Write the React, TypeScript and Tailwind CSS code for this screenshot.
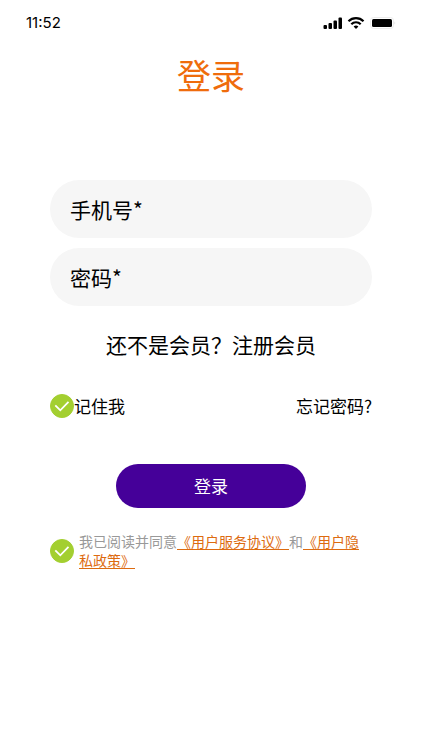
import React, { useState } from 'react';

function StatusIcons() {
  return (
    <div className="flex items-center gap-1">
      <svg width="20" height="12" viewBox="0 0 20 12" fill="black" aria-hidden="true">
        <rect x="0.500" y="8" width="3.500" height="4" rx="1" />
        <rect x="5.500" y="6" width="3.500" height="6" rx="1" />
        <rect x="10.500" y="3.500" width="3.500" height="8.500" rx="1" />
        <rect x="15.500" y="0.500" width="3.500" height="11.500" rx="1" />
      </svg>
      <svg width="18" height="14" viewBox="0 0 18 14" fill="none" stroke="black" strokeWidth="2.2" aria-hidden="true">
        <path d="M1.500 5.200a10.600 10.600 0 0 1 15 0" />
        <path d="M4.300 8.200a6.600 6.600 0 0 1 9.400 0" />
        <path d="M9 13 6.600 10.600a3.400 3.400 0 0 1 4.800 0z" fill="black" stroke="none" />
      </svg>
      <svg width="27" height="14" viewBox="0 0 27 14" fill="none" aria-hidden="true">
        <rect x="1.500" y="1.500" width="23" height="11" rx="3" stroke="#ececec" />
        <rect x="3" y="3" width="20" height="8" rx="1.500" fill="black" />
        <path d="M25.500 5.500v3c1-.6 1-2.400 0-3z" fill="#dddddd" />
      </svg>
    </div>
  );
}

type CheckProps = {
  label: string;
  checked: boolean;
  onChange: (checked: boolean) => void;
};

function RoundCheck({ label, checked, onChange }: CheckProps) {
  return (
    <span className="relative block h-6 w-6 shrink-0">
      <input
        type="checkbox"
        aria-label={label}
        checked={checked}
        onChange={(e) => onChange(e.target.checked)}
        className="block h-6 w-6 appearance-none rounded-full border border-[#a3cf30] checked:bg-[#a3cf30]"
      />
      {checked && (
        <svg className="pointer-events-none absolute inset-0" width="24" height="24" viewBox="0 0 24 24" fill="none" stroke="white" strokeWidth="1.800">
          <path d="m5.300 11.300 5 5 8.200-8.400" />
        </svg>
      )}
    </span>
  );
}

type FieldProps = {
  type: string;
  label: string;
};

function Field({ type, label }: FieldProps) {
  return (
    <input
      type={type}
      aria-label={label}
      placeholder={`${label}*`}
      className="h-[58px] w-full rounded-full bg-[#f6f6f6] px-5 text-[21px] outline-none placeholder:text-black"
    />
  );
}

export default function App() {
  const [remember, setRemember] = useState(true);
  const [agreed, setAgreed] = useState(true);

  return (
    <div className="min-h-screen bg-white font-['Noto_Sans_CJK_SC',sans-serif] text-black">
      <header className="flex h-[46px] items-center justify-between pr-[26px] pl-[26px] font-['Inter',sans-serif] text-[15px]">
        <span>11:52</span>
        <StatusIcons />
      </header>
      <main className="px-[50px]">
        <h1 className="mt-1 text-center text-[34px] leading-[50px] text-[#ef6c0c]">登录</h1>
        <form className="mt-20" onSubmit={(e) => e.preventDefault()}>
          <div className="flex flex-col gap-[10px]">
            <Field type="tel" label="手机号" />
            <Field type="password" label="密码" />
          </div>
          <a href="#register" className="mt-6 block text-center text-[21px] leading-7">
            还不是会员？注册会员
          </a>
          <div className="mt-9 flex items-center justify-between text-[17px] leading-6">
            <label className="flex items-center">
              <RoundCheck label="记住我" checked={remember} onChange={setRemember} />
              记住我
            </label>
            <a href="#forgot">忘记密码?</a>
          </div>
          <button type="submit" className="mx-auto mt-[46px] block h-11 w-[190px] rounded-full bg-[#450099] text-[17px] text-white">
            登录
          </button>
          <div className="mt-6 flex items-center gap-[5px] text-sm leading-[19px] text-[#999999]">
            <RoundCheck label="我已阅读并同意" checked={agreed} onChange={setAgreed} />
            <p className="flex-1">
              我已阅读并同意
              <a href="#terms" className="text-[#dd6b10] underline underline-offset-2">《用户服务协议》</a>
              和
              <a href="#privacy" className="text-[#dd6b10] underline underline-offset-2">《用户隐私政策》</a>
            </p>
          </div>
        </form>
      </main>
    </div>
  );
}
